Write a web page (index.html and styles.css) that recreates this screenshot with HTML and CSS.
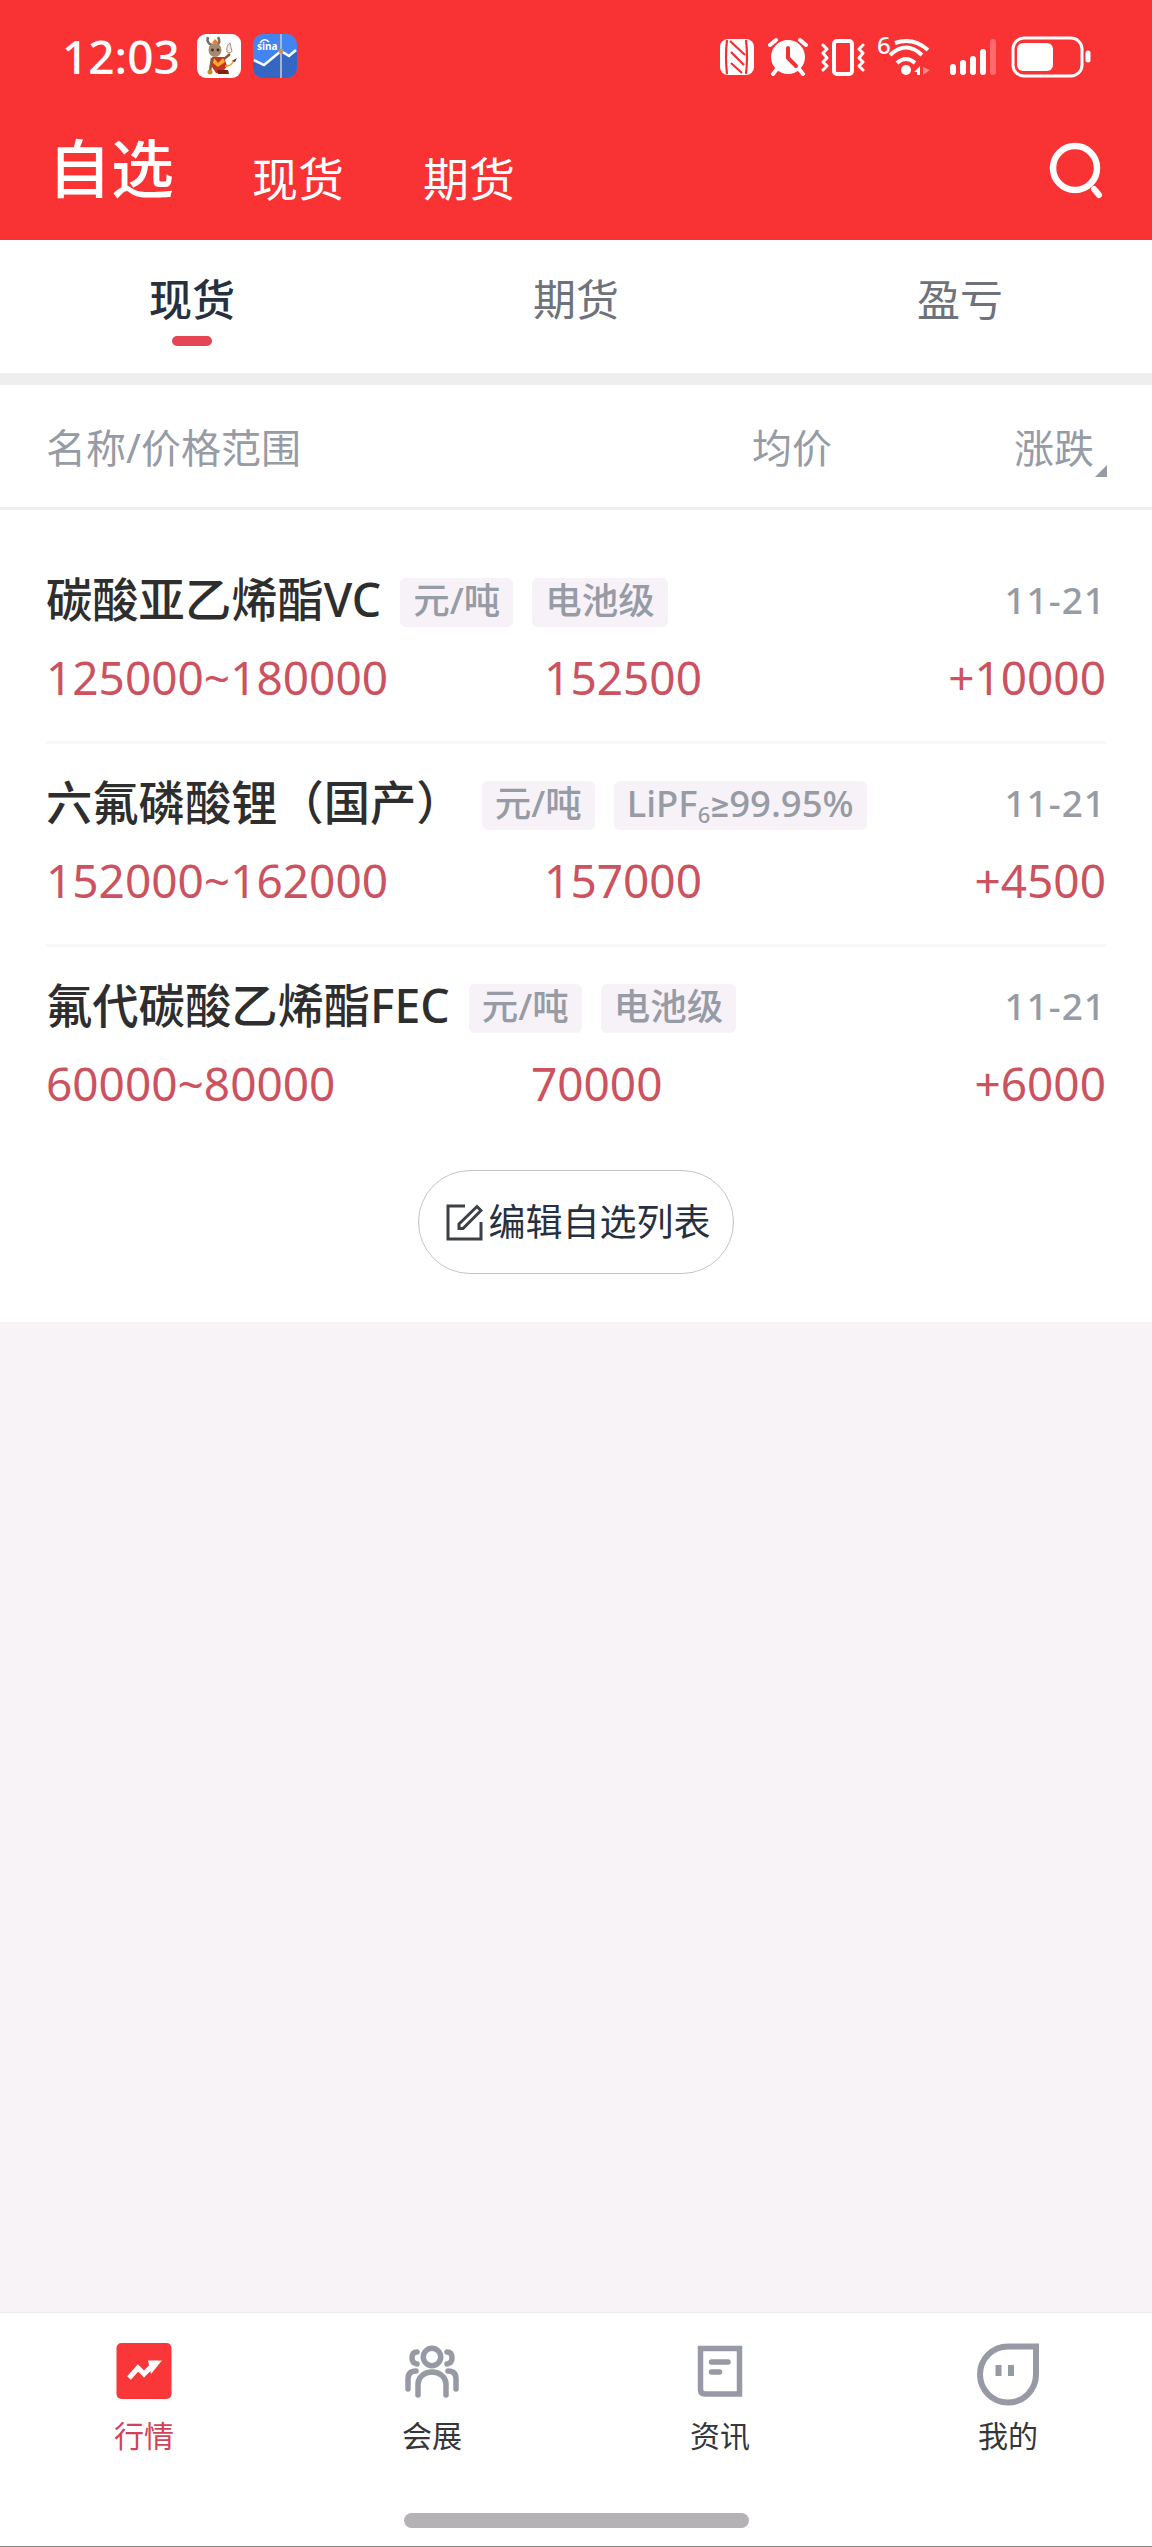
FILE: index.html
```html
<!DOCTYPE html>
<html lang="zh-CN">
<head>
  <meta charset="UTF-8">
  <meta name="viewport" content="width=device-width, initial-scale=1.0">
  <title>自选</title>
  <link rel="stylesheet" href="styles.css">
</head>
<body>

  <header class="header">
    <!-- Status bar -->
    <div class="status">
      <span class="time">12:03</span>
      <svg class="app-icon" viewBox="0 0 44 44">
        <rect width="44" height="44" rx="9" fill="#fff"/>
        <path d="M11 3q-2 6 4 8M21 3q3 5-1 8" fill="none" stroke="#7d6a5c" stroke-width="2.5"/>
        <path d="M15 9l3-4 4 4z" fill="#d9822b"/>
        <ellipse cx="18" cy="16" rx="6.5" ry="7" fill="#a58a72"/>
        <circle cx="15.500" cy="16" r="1.400" fill="#3b2a25"/>
        <circle cx="21" cy="16" r="1.400" fill="#3b2a25"/>
        <path d="M15 23h12l3 9-5 7h-6l-4-6z" fill="#c8321e"/>
        <path d="M17 24l4 5 5-5 2 4-7 5-5-4z" fill="#efb02e"/>
        <path d="M27 25l6-5M15 24l-2 13" fill="none" stroke="#8a5a33" stroke-width="2.500"/>
        <path d="M30 18q-1-7 3-9 1 5 2 8-1 3-5 1z" fill="#f0ead9" stroke="#9a9184"/>
        <path d="M28 32q6 1 9-6" fill="none" stroke="#e2a227" stroke-width="1.500"/>
        <path d="M35 27l5-3-2 4z" fill="#5a2c25"/>
        <circle cx="13" cy="38" r="2.500" fill="#c98b24"/>
        <path d="M20 36h11l1 4H21z" fill="#7c2318"/>
      </svg>
      <svg class="app-icon" viewBox="0 0 44 44">
        <rect width="44" height="44" rx="10" fill="#4285f0"/>
        <path d="M0 28l11 4 17-15 8 6 8-6v17a10 10 0 0 1-10 10H10A10 10 0 0 1 0 34z" fill="#3467c4"/>
        <path d="M1 26l10 5 17-14 8 5 7-6" fill="none" stroke="#fff" stroke-width="2.500"/>
        <path d="M28 0v44" stroke="#c9cdd0" stroke-width="1.500"/>
        <circle cx="28" cy="17" r="2.500" fill="#b99a67"/>
        <path d="M7 9q4-6 9-1" fill="none" stroke="#fff" stroke-width="1.500"/>
        <text x="4" y="16" class="sina">sina</text>
      </svg>

      <div class="status-right">
        <svg width="36" height="44" viewBox="0 0 36 44">
          <rect x="1" y="5" width="34" height="36" rx="8" fill="#fff"/>
          <path d="M8 6q-2 17 0 34M27 6q2 17 0 34M11 7l15 14M12 18l13 13M12 29l11 10" fill="none" stroke="#f23034" stroke-width="2.200"/>
        </svg>
        <svg width="40" height="44" viewBox="0 0 40 44">
          <circle cx="20" cy="23" r="17" fill="#fff"/>
          <path d="M2 11l6-5M38 11l-6-5M9 35l-4 5M31 35l4 5" stroke="#fff" stroke-width="4" stroke-linecap="round"/>
          <path d="M20 14v10l8 8" fill="none" stroke="#f23034" stroke-width="4" stroke-linecap="round"/>
        </svg>
        <svg width="44" height="44" viewBox="0 0 44 44">
          <rect x="13" y="7" width="18" height="33" rx="3" fill="none" stroke="#fff" stroke-width="4"/>
          <path d="M2 11l4 4-4 4 4 5-4 4 4 4-4 4M42 11l-4 4 4 4-4 5 4 4-4 4 4 4" fill="none" stroke="#fff" stroke-width="3" stroke-linejoin="round" stroke-linecap="round"/>
        </svg>
        <svg class="wifi" width="52" height="44" viewBox="0 0 52 44">
          <text x="-1" y="20" class="wifi-num">6</text>
          <path d="M17 9q18-6 33 7M12 21q16-15 32 0M19 29q9-8 18 0" fill="none" stroke="#fff" stroke-width="4"/>
          <circle cx="28" cy="36" r="5" fill="#fff"/>
          <path d="M42 32v9h-3v-3h-3z" fill="#fff"/>
          <path d="M45 33l7 3-7 5z" fill="#ff8a8c"/>
        </svg>
        <svg width="48" height="44" viewBox="0 0 48 44">
          <path d="M4 33v5M14 29v9M24 25v13M34 18v20" stroke="#fff" stroke-width="6" stroke-linecap="round"/>
          <path d="M44 8v30" stroke="#ff6b6e" stroke-width="6" stroke-linecap="round"/>
        </svg>
        <svg width="82" height="44" viewBox="0 0 82 44">
          <rect x="3" y="4" width="69" height="38" rx="11" fill="none" stroke="#fff" stroke-width="3"/>
          <rect x="7" y="9" width="36" height="28" rx="6" fill="#fff"/>
          <path d="M78 19v7" stroke="#fff" stroke-width="5" stroke-linecap="round"/>
        </svg>
      </div>
    </div>

    <div class="top-nav">
      <a class="top-link active">自选</a>
      <a class="top-link">现货</a>
      <a class="top-link">期货</a>
      <svg class="search" viewBox="0 0 56 60">
        <circle cx="27" cy="27" r="22" fill="none" stroke="#fff" stroke-width="6.500"/>
        <path d="M46 48l5 6" stroke="#fff" stroke-width="6" stroke-linecap="round"/>
      </svg>
    </div>
  </header>

  <div class="tabs">
    <div class="tab active">现货</div>
    <div class="tab">期货</div>
    <div class="tab">盈亏</div>
  </div>

  <div class="list-head">
    <span class="head-name">名称/价格范围</span>
    <span class="head-avg">均价</span>
    <span class="head-change">涨跌</span>
    <svg class="sort" viewBox="0 0 12 12"><path d="M12 0v12H0z" fill="#969ba5"/></svg>
  </div>

  <main class="list">
    <div class="item">
      <div class="item-top">
        <span class="name">碳酸亚乙烯酯VC</span>
        <span class="tag">元/吨</span>
        <span class="tag">电池级</span>
        <span class="date">11-21</span>
      </div>
      <div class="item-price">
        <span>125000~180000</span>
        <span class="avg">152500</span>
        <span class="change">+10000</span>
      </div>
    </div>

    <div class="item">
      <div class="item-top">
        <span class="name">六氟磷酸锂（国产）</span>
        <span class="tag">元/吨</span>
        <span class="tag">LiPF<span class="sub">6</span>≥99.95%</span>
        <span class="date">11-21</span>
      </div>
      <div class="item-price">
        <span>152000~162000</span>
        <span class="avg">157000</span>
        <span class="change">+4500</span>
      </div>
    </div>

    <div class="item">
      <div class="item-top">
        <span class="name">氟代碳酸乙烯酯FEC</span>
        <span class="tag">元/吨</span>
        <span class="tag">电池级</span>
        <span class="date">11-21</span>
      </div>
      <div class="item-price">
        <span>60000~80000</span>
        <span class="avg">70000</span>
        <span class="change">+6000</span>
      </div>
    </div>

    <button class="edit-button">
      <svg width="37" height="37" viewBox="0 0 37 37" fill="none" stroke="#3d4045" stroke-width="3">
        <path d="M19 2H2v33h33V18"/>
        <path d="M13 20L31 2.500l4 4L17 24.500h-4z"/>
      </svg>
      <span>编辑自选列表</span>
    </button>
  </main>

  <!-- Bottom tabs -->
  <nav class="bottom">
    <a class="bottom-tab active">
      <svg viewBox="0 0 64 64">
        <rect x="4.500" y="1" width="55" height="56" rx="5" fill="#f93638"/>
        <path d="M17 36l9-10 6 6 12-12" fill="none" stroke="#fff" stroke-width="5"/>
        <path d="M36 18.500h14L39 32z" fill="#fff"/>
      </svg>
      行情
    </a>
    <a class="bottom-tab">
      <svg viewBox="0 0 64 64" fill="none" stroke="#959aa5" stroke-width="5.500" stroke-linecap="round">
        <circle cx="32" cy="15" r="8.700"/>
        <path d="M18 53V42a14 12 0 0 1 28 0v11"/>
        <path d="M17 10q-5 0-5 6 0 5 5 6M47 10q5 0 5 6 0 5-5 6M16 29q-8 0-8 8v10M48 29q8 0 8 8v10"/>
      </svg>
      会展
    </a>
    <a class="bottom-tab">
      <svg viewBox="0 0 64 64" fill="none" stroke="#959aa5" stroke-width="5.500">
        <path d="M12.500 6.500h39v45.500H17q-4.500 0-4.500-4.500z"/>
        <path d="M23.500 20h16.500M23.500 30h8" stroke-linecap="round"/>
      </svg>
      资讯
    </a>
    <a class="bottom-tab">
      <svg viewBox="0 0 64 64" fill="none" stroke="#959aa5" stroke-width="6">
        <path d="M32 4.500h28V32.500a28 28 0 1 1-28-28z"/>
        <path d="M22.500 23v11M35 23v11"/>
      </svg>
      我的
    </a>
  </nav>
  <div class="home-bar"><span></span></div>

</body>
</html>
```
FILE: styles.css
```css
* {
  box-sizing: border-box;
}

body {
  margin: 0;
  height: 2547px;
  display: flex;
  flex-direction: column;
  background-color: #f7f3f7;
  font-family: "Noto Sans", Roboto, "Noto Sans CJK SC", sans-serif;
}

svg {
  display: block;
  flex-shrink: 0;
}

.header {
  height: 240px;
  background-color: #f93234;
  color: #fff;
}

/* Status bar */
.status {
  display: flex;
  align-items: center;
  height: 112px;
  padding: 0 60px 0 62px;
}

.time {
  width: 135px;
  font-size: 46px;
  font-weight: 500;
  line-height: 60px;
}

.app-icon {
  width: 44px;
  height: 44px;
  margin-right: 12px;
}

.sina {
  font-size: 10px;
  font-weight: bold;
  fill: #fff;
}

.wifi {
  overflow: visible;
}

.wifi-num {
  font-size: 24px;
  font-weight: 500;
  fill: #fff;
}

.status-right {
  display: flex;
  align-items: center;
  gap: 13px;
  margin-left: auto;
}

.status-right svg:nth-child(5) {
  margin-left: 6px;
}

.top-nav {
  display: flex;
  align-items: flex-start;
  height: 128px;
  padding: 0 48px 0 48px;
}

.top-link {
  margin-right: 79px;
  font-size: 46px;
  line-height: 132px;
}

.top-link.active {
  margin-right: 78px;
  font-size: 63px;
  font-weight: 500;
  line-height: 112px;
}

.search {
  width: 56px;
  height: 60px;
  margin: 29px 0 0 auto;
}

/* Spot / futures / profit tabs */
.tabs {
  display: flex;
  height: 145px;
  background-color: #fff;
  border-bottom: 12px solid #eee;
}

.tab {
  flex: 1;
  display: flex;
  flex-direction: column;
  align-items: center;
  padding-top: 28px;
  color: #6d727b;
  font-size: 43px;
  line-height: 64px;
}

.tab.active {
  color: #27303f;
  font-weight: 500;
}

.tab.active::after {
  content: "";
  width: 40px;
  height: 10px;
  margin-top: 4px;
  border-radius: 5px;
  background-color: #e64556;
}

.list-head {
  display: flex;
  height: 125px;
  padding: 0 45px 3px 46px;
  background-color: #fff;
  border-bottom: 3px solid #eee;
  color: #969ba5;
  font-size: 40px;
  line-height: 126px;
}

.head-name {
  width: 706px;
}

.head-avg {
  width: 262px;
}

.sort {
  width: 12px;
  height: 12px;
  margin: 80px 0 0 auto;
}

.list {
  height: 812px;
  padding: 31px 46px 0;
  background-color: #fff;
}

.item {
  height: 203px;
  padding-top: 31px;
}

.item:nth-child(-n+2) {
  border-bottom: 3px solid #f7f7f7;
}

.item-top {
  display: flex;
  align-items: center;
  gap: 19px;
  height: 60px;
}

.name {
  align-self: flex-start;
  color: #2e2e2e;
  font-size: 46.3px;
  font-weight: 500;
  line-height: 55px;
}

.tag {
  height: 49px;
  padding: 0 13px;
  border-radius: 6px;
  background-color: #f6f2f7;
  color: #969ba5;
  font-size: 36.5px;
  font-weight: 500;
  line-height: 45px;
}

.sub {
  position: relative;
  top: 6px;
  font-size: 22px;
}

.date {
  margin-left: auto;
  padding-bottom: 5px;
  color: #969ba5;
  font-size: 37px;
  font-weight: 500;
  letter-spacing: 1px;
}

.item-price {
  display: flex;
  margin-top: 15px;
  color: #cc5260;
  font-size: 46px;
  font-weight: 450;
  line-height: 60px;
}

.avg {
  flex: 1;
  text-align: center;
}

.change {
  width: 248px;
  text-align: right;
}

.edit-button {
  display: flex;
  align-items: center;
  justify-content: center;
  gap: 6px;
  width: 316px;
  height: 104px;
  margin: 20px auto 0;
  padding: 0 0 0 4px;
  border: 1px solid #c4c4c6;
  border-radius: 52px;
  background-color: #fff;
  color: #27303f;
  font-family: inherit;
  font-size: 37px;
}

.edit-button span {
  padding-bottom: 5px;
}

/* Bottom tabs */
.bottom {
  display: flex;
  height: 190px;
  margin-top: auto;
  border-top: 1px solid #eeebee;
  background-color: #fff;
}

.bottom-tab {
  flex: 1;
  display: flex;
  flex-direction: column;
  align-items: center;
  padding-top: 29px;
  color: #34363a;
  font-size: 30px;
  line-height: 44px;
}

.bottom-tab svg {
  width: 64px;
  height: 64px;
  margin-bottom: 8px;
}

.bottom-tab.active {
  color: #d24358;
}

.home-bar {
  height: 45px;
  padding-top: 11px;
  border-bottom: 1px solid #858585;
  background-color: #fff;
}

.home-bar span {
  display: block;
  width: 345px;
  height: 15px;
  margin: 0 auto;
  border-radius: 8px;
  background-color: #b5b2b5;
}
```
